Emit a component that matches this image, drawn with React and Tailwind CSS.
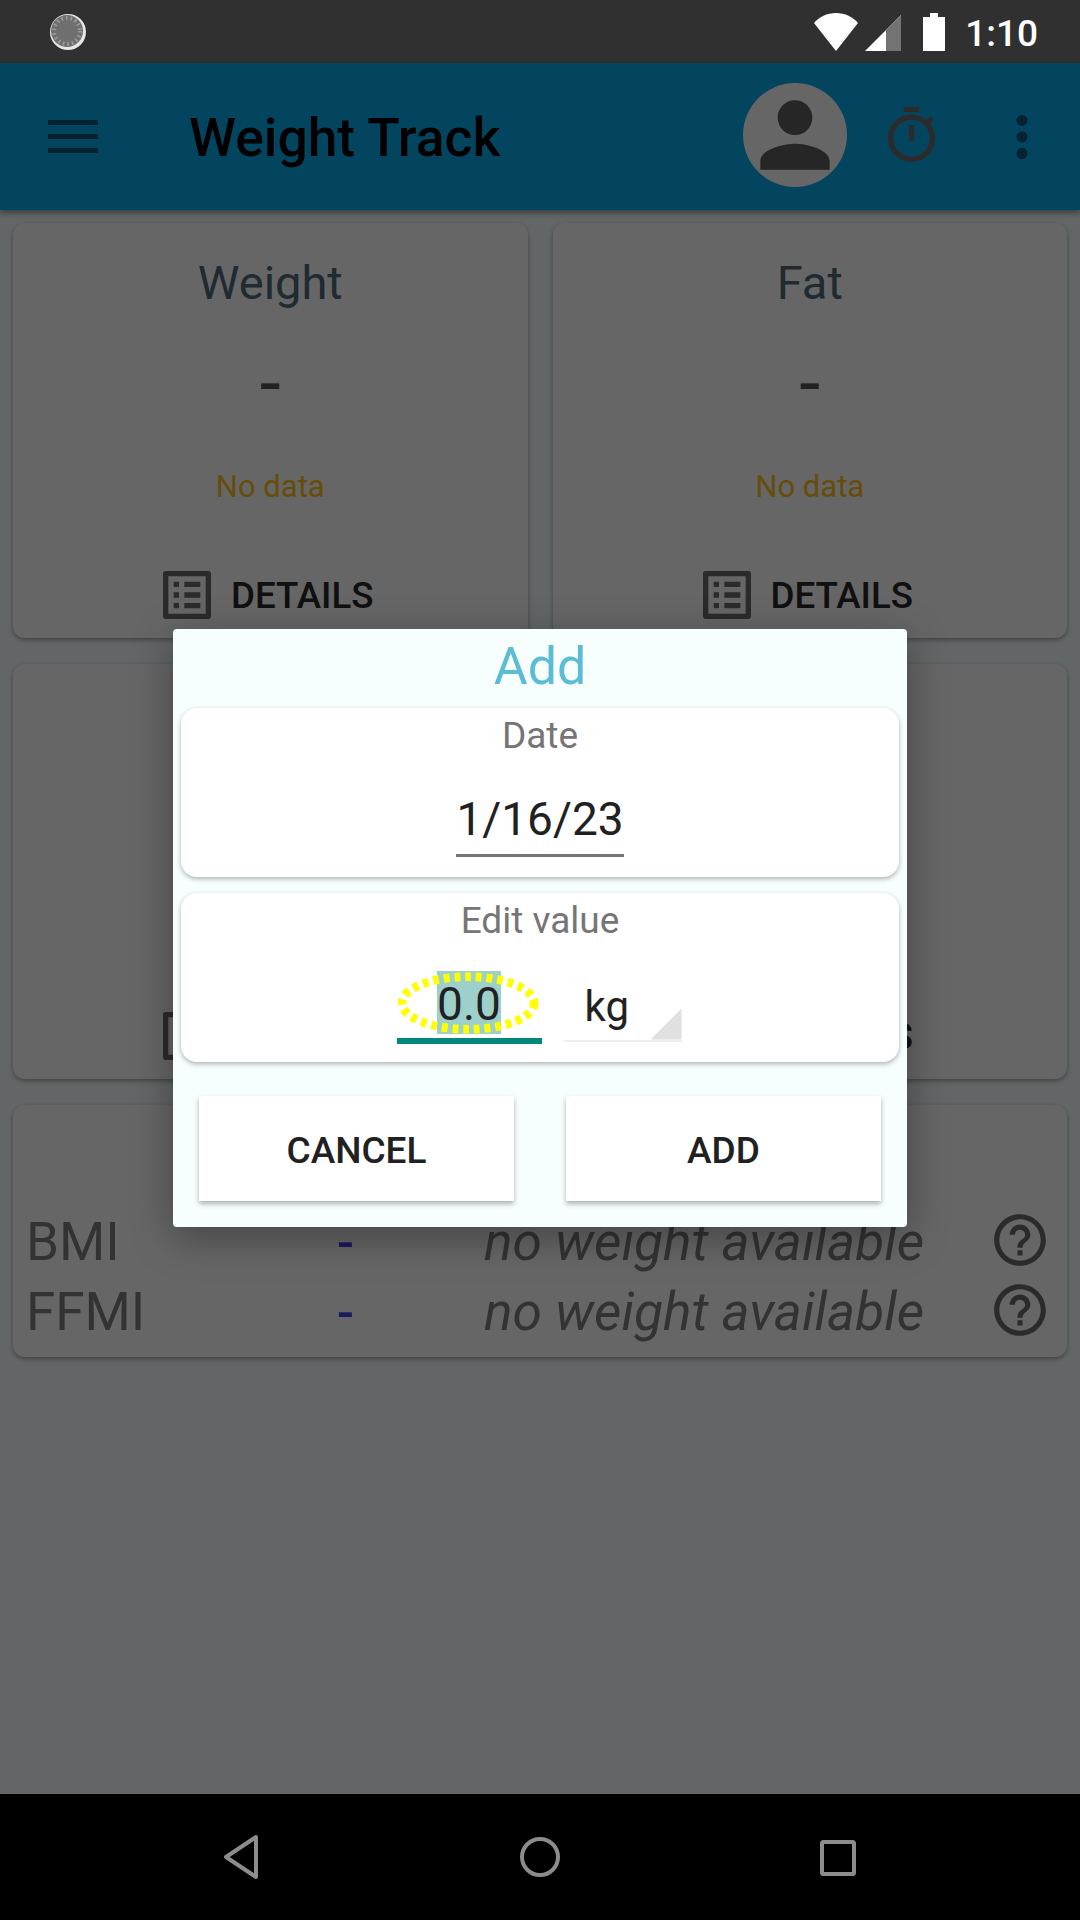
import React from 'react'

const P = {
  person: 'M12 12c2.21 0 4-1.79 4-4s-1.79-4-4-4-4 1.79-4 4 1.79 4 4 4zm0 2c-2.67 0-8 1.34-8 4v2h16v-2c0-2.66-5.33-4-8-4z',
  timer: 'M9 1h6v2H9zm2 7h2v6h-2zm8.03-.61l1.42-1.42c-.43-.51-.9-.99-1.41-1.41l-1.42 1.42C16.07 4.74 14.12 4 12 4c-4.97 0-9 4.03-9 9s4.02 9 9 9 9-4.03 9-9c0-2.12-.74-4.07-1.97-5.61zM12 20c-3.87 0-7-3.13-7-7s3.13-7 7-7 7 3.13 7 7-3.13 7-7 7z',
  dots: 'M12 8c1.1 0 2-.9 2-2s-.9-2-2-2-2 .9-2 2 .9 2 2 2zm0 2c-1.1 0-2 .9-2 2s.9 2 2 2 2-.9 2-2-.9-2-2-2zm0 6c-1.1 0-2 .9-2 2s.9 2 2 2 2-.9 2-2-.9-2-2-2z',
  list: 'M19 5v14H5V5h14m1.1-2H3.9c-.5 0-.9.4-.9.9v16.2c0 .4.4.9.9.9h16.2c.4 0 .9-.5.9-.9V3.9c0-.5-.5-.9-.9-.9zM11 7h6v2h-6V7zm0 4h6v2h-6v-2zm0 4h6v2h-6zM7 7h2v2H7zm0 4h2v2H7zm0 4h2v2H7z',
  help: 'M11 18h2v-2h-2v2zm1-16C6.48 2 2 6.48 2 12s4.48 10 10 10 10-4.48 10-10S17.52 2 12 2zm0 18c-4.41 0-8-3.59-8-8s3.59-8 8-8 8 3.59 8 8-3.59 8-8 8zm0-14c-2.21 0-4 1.79-4 4h2c0-1.1.9-2 2-2s2 .9 2 2c0 2-3 1.75-3 5h2c0-2.25 3-2.5 3-5 0-2.21-1.79-4-4-4z',
}

const Icon = ({ d, className }) => (
  <svg viewBox="0 0 24 24" className={className} fill="currentColor">
    <path d={d} />
  </svg>
)

const Details = () => (
  <div className="flex items-center justify-center gap-[12px] h-[64px] pr-[12px]">
    <Icon d={P.list} className="w-[64px] h-[64px] text-[#6b6b6b]" />
    <span className="text-[36.7px] font-medium text-[#2a2a2a] translate-y-[1px]">DETAILS</span>
  </div>
)

const StatCard = ({ title }) => (
  <div className="h-[415px] bg-white rounded-[12px] shadow-[0_2px_5px_rgba(0,0,0,0.35)] flex flex-col items-center pt-[32px]">
    <div className="h-[56px] leading-[56px] text-[47px] text-[#526a7c]">{title}</div>
    <div className="h-[44px] mt-[50px] leading-[44px] text-[76px] text-[#555]">-</div>
    <div className="h-[40px] mt-[62px] leading-[40px] text-[31px] text-[#ffc018]">No data</div>
    <div className="mt-auto mb-[11px]">
      <Details />
    </div>
  </div>
)

const BlankCard = () => (
  <div className="h-[415px] bg-white rounded-[12px] shadow-[0_2px_5px_rgba(0,0,0,0.35)] flex flex-col justify-end pb-[11px]">
    <Details />
  </div>
)

const IndexRow = ({ name }) => (
  <div className="grid grid-cols-[304px_112px_1fr_62px] items-center h-[70px] pl-[13px] pr-[16px]">
    <span className="text-[53px] text-[#808080]">{name}</span>
    <span className="text-[50px] font-medium text-[#4343ee] leading-none pl-[7px]">-</span>
    <span className="text-[53.3px] italic text-[#808080] pl-[42px] whitespace-nowrap">no weight available</span>
    <Icon d={P.help} className="w-[62px] h-[62px] mb-[5px] text-[#6b6b6b]" />
  </div>
)

const StatusBar = () => (
  <div className="h-[63px] shrink-0 bg-[#303030] flex items-center pl-[49px] pr-[42px]">
    <svg viewBox="0 0 38 38" className="w-[38px] h-[38px]">
      <circle cx="19" cy="19" r="18" fill="#e6e6e6" />
      <circle cx="18" cy="18" r="16" fill="#6f6f6f" />
      <circle cx="18" cy="18" r="13" fill="none" stroke="#9a9a9a" strokeWidth="4" strokeDasharray="1.6 3" />
    </svg>
    <div className="ml-auto flex items-center">
      <svg viewBox="0 0 46 38" className="w-[46px] h-[38px]">
        <path d="M23 38 L1 10 C6 4 14 0 23 0 C32 0 40 4 45 10 Z" fill="#fff" />
      </svg>
      <svg viewBox="0 0 36 38" className="w-[36px] h-[38px] ml-[6px]">
        <path d="M36 2 V38 H0 Z" fill="#fff" />
        <path d="M36 2 V38 H21 V17 Z" fill="#737373" />
      </svg>
      <svg viewBox="0 0 22 38" className="w-[22px] h-[38px] ml-[22px]">
        <path d="M7 0 h8 v4 h7 v34 h-22 v-34 h7 z" fill="#fff" />
      </svg>
      <span className="ml-[20px] pt-[3px] text-[37px] leading-none font-medium text-white">1:10</span>
    </div>
  </div>
)

const AppBar = () => (
  <div className="h-[147px] shrink-0 bg-[#08aced] shadow-[0_3px_6px_rgba(0,0,0,0.4)] flex items-center pl-[48px] pr-[25px] relative">
    <div className="flex flex-col gap-[9px] w-[50px]">
      <div className="h-[5px] bg-[#0a5575]" />
      <div className="h-[5px] bg-[#0a5575]" />
      <div className="h-[5px] bg-[#0a5575]" />
    </div>
    <div className="ml-[91px] pt-[4px] text-[53.4px] font-medium text-black">Weight Track</div>
    <div className="ml-auto mb-[3px] w-[104px] h-[104px] rounded-full bg-white flex items-center justify-center overflow-hidden">
      <Icon d={P.person} className="w-[112px] h-[112px] text-[#5f5f5f]" />
    </div>
    <Icon d={P.timer} className="w-[63px] h-[63px] ml-[33px] mb-[2px] text-[#6b6b6b]" />
    <Icon d={P.dots} className="w-[66px] h-[66px] ml-[46px] text-[#0a5575]" />
  </div>
)

const Dialog = () => (
  <div className="w-[734px] h-[598px] bg-[#f6fffe] rounded-[4px] shadow-[0_10px_40px_rgba(0,0,0,0.35)] px-[8px] flex flex-col">
    <div className="h-[79px] leading-[76px] text-center text-[52px] text-[#5cbcd6]">Add</div>
    <div className="h-[169px] bg-white rounded-[16px] shadow-[0_2px_5px_rgba(0,0,0,0.3)] flex flex-col items-center pt-[6px]">
      <div className="text-[37px] leading-[44px] text-[#757575]">Date</div>
      <div className="mt-[31px] w-[168px] h-[68px] border-b-[3px] border-[#757575] text-center text-[46px] leading-[60px] text-[#212121]">1/16/23</div>
    </div>
    <div className="mt-[16px] h-[169px] bg-white rounded-[16px] shadow-[0_2px_5px_rgba(0,0,0,0.3)] flex flex-col items-center pt-[6px]">
      <div className="text-[37px] leading-[44px] text-[#757575]">Edit value</div>
      <div className="flex items-end mt-[27px] ml-[-2px]">
        <div className="relative w-[145px] h-[74px] border-b-[6px] border-[#00897b] flex justify-center">
          <span className="mt-[1px] h-[63px] w-[64px] bg-[#9dd0ca] text-center text-[46px] leading-[66px] text-[#212121]">0.0</span>
          <svg viewBox="0 0 146 66" className="absolute left-[1px] top-0 w-[142px] h-[66px]">
            <ellipse cx="72" cy="33" rx="68" ry="27" fill="none" stroke="#ffff00" strokeWidth="9" strokeDasharray="6 5" />
          </svg>
        </div>
        <div className="relative ml-[22px] w-[118px] h-[60px] border-b-2 border-[#eeeeee] mb-[2px] pl-[21px]">
          <span className="text-[42px] leading-[50px] text-[#212121]">kg</span>
          <div className="absolute right-0 bottom-0 w-[31px] h-[31px] bg-[#e0e0e0] [clip-path:polygon(100%_0,100%_100%,0_100%)]" />
        </div>
      </div>
    </div>
    <div className="mt-[34px] px-[18px] flex justify-between">
      <div className="w-[315px] h-[105px] pt-[5px] bg-white shadow-[0_3px_5px_rgba(0,0,0,0.3)] flex items-center justify-center text-[37px] font-medium text-[#212121]">CANCEL</div>
      <div className="w-[315px] h-[105px] pt-[5px] bg-white shadow-[0_3px_5px_rgba(0,0,0,0.3)] flex items-center justify-center text-[37px] font-medium text-[#212121]">ADD</div>
    </div>
  </div>
)

const NavBar = () => (
  <div className="h-[126px] shrink-0 bg-black flex items-center pl-[222px] gap-[259px]">
    <svg viewBox="0 0 38 46" className="w-[38px] h-[46px]">
      <path d="M34 3 L4 23 L34 43 Z" fill="none" stroke="#8c8c8c" strokeWidth="4" strokeLinejoin="round" />
    </svg>
    <svg viewBox="0 0 42 42" className="w-[42px] h-[42px]">
      <circle cx="21" cy="21" r="18" fill="none" stroke="#8c8c8c" strokeWidth="4" />
    </svg>
    <svg viewBox="0 0 36 36" className="w-[36px] h-[36px] mt-[1px]">
      <rect x="2" y="2" width="32" height="32" rx="1.5" fill="none" stroke="#8c8c8c" strokeWidth="4" />
    </svg>
  </div>
)

const App = () => {
  return (
    <div className="w-[1080px] h-[1920px] flex flex-col overflow-hidden font-['Roboto',sans-serif]">
      <StatusBar />
      <div className="relative flex-1 bg-[#f8ffff] flex flex-col">
        <AppBar />
        <div className="px-[13px] pt-[13px] flex flex-col gap-[26px]">
          <div className="grid grid-cols-2 gap-[25px]">
            <StatCard title="Weight" />
            <StatCard title="Fat" />
          </div>
          <div className="grid grid-cols-2 gap-[25px]">
            <BlankCard />
            <BlankCard />
          </div>
          <div className="h-[252px] bg-white rounded-[12px] shadow-[0_2px_5px_rgba(0,0,0,0.35)] pt-[98px]">
            <IndexRow name="BMI" />
            <IndexRow name="FFMI" />
          </div>
        </div>
        <div className="absolute inset-0 bg-black/60 flex items-center justify-center pb-[2px]">
          <Dialog />
        </div>
      </div>
      <NavBar />
    </div>
  )
}

export default App
